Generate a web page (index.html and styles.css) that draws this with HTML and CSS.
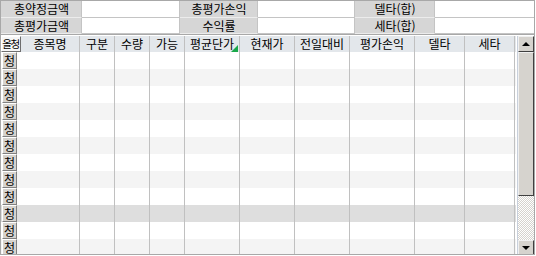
FILE: index.html
```html
<!DOCTYPE html>
<html lang="ko">
<head>
<meta charset="utf-8">
<link rel="stylesheet" href="styles.css">
</head>
<body>
<div class="wrap">
  <div class="summary">
    <div class="lbl">총약정금액</div><div class="val"></div>
    <div class="lbl">총평가손익</div><div class="val"></div>
    <div class="lbl">델타(합)</div><div class="val last"></div>
    <div class="lbl">총평가금액</div><div class="val"></div>
    <div class="lbl">수익률</div><div class="val"></div>
    <div class="lbl">세타(합)</div><div class="val last"></div>
  </div>
  <div class="gridarea">
    <div class="table">
      <div class="row head">
        <div class="hbtn">올청</div>
        <div class="hc">종목명</div>
        <div class="hc">구분</div>
        <div class="hc">수량</div>
        <div class="hc">가능</div>
        <div class="hc sorted">평균단가<span class="tri"></span></div>
        <div class="hc">현재가</div>
        <div class="hc">전일대비</div>
        <div class="hc">평가손익</div>
        <div class="hc">델타</div>
        <div class="hc">세타</div>
      </div>
      <div class="body">
        <div class="row"><div class="rbtn">청</div><div class="c"></div><div class="c"></div><div class="c"></div><div class="c"></div><div class="c"></div><div class="c"></div><div class="c"></div><div class="c"></div><div class="c"></div><div class="c"></div></div>
        <div class="row alt"><div class="rbtn">청</div><div class="c"></div><div class="c"></div><div class="c"></div><div class="c"></div><div class="c"></div><div class="c"></div><div class="c"></div><div class="c"></div><div class="c"></div><div class="c"></div></div>
        <div class="row"><div class="rbtn">청</div><div class="c"></div><div class="c"></div><div class="c"></div><div class="c"></div><div class="c"></div><div class="c"></div><div class="c"></div><div class="c"></div><div class="c"></div><div class="c"></div></div>
        <div class="row alt"><div class="rbtn">청</div><div class="c"></div><div class="c"></div><div class="c"></div><div class="c"></div><div class="c"></div><div class="c"></div><div class="c"></div><div class="c"></div><div class="c"></div><div class="c"></div></div>
        <div class="row"><div class="rbtn">청</div><div class="c"></div><div class="c"></div><div class="c"></div><div class="c"></div><div class="c"></div><div class="c"></div><div class="c"></div><div class="c"></div><div class="c"></div><div class="c"></div></div>
        <div class="row alt"><div class="rbtn">청</div><div class="c"></div><div class="c"></div><div class="c"></div><div class="c"></div><div class="c"></div><div class="c"></div><div class="c"></div><div class="c"></div><div class="c"></div><div class="c"></div></div>
        <div class="row"><div class="rbtn">청</div><div class="c"></div><div class="c"></div><div class="c"></div><div class="c"></div><div class="c"></div><div class="c"></div><div class="c"></div><div class="c"></div><div class="c"></div><div class="c"></div></div>
        <div class="row alt"><div class="rbtn">청</div><div class="c"></div><div class="c"></div><div class="c"></div><div class="c"></div><div class="c"></div><div class="c"></div><div class="c"></div><div class="c"></div><div class="c"></div><div class="c"></div></div>
        <div class="row"><div class="rbtn">청</div><div class="c"></div><div class="c"></div><div class="c"></div><div class="c"></div><div class="c"></div><div class="c"></div><div class="c"></div><div class="c"></div><div class="c"></div><div class="c"></div></div>
        <div class="row sel"><div class="rbtn">청</div><div class="c"></div><div class="c"></div><div class="c"></div><div class="c"></div><div class="c"></div><div class="c"></div><div class="c"></div><div class="c"></div><div class="c"></div><div class="c"></div></div>
        <div class="row"><div class="rbtn">청</div><div class="c"></div><div class="c"></div><div class="c"></div><div class="c"></div><div class="c"></div><div class="c"></div><div class="c"></div><div class="c"></div><div class="c"></div><div class="c"></div></div>
        <div class="row alt"><div class="rbtn">청</div><div class="c"></div><div class="c"></div><div class="c"></div><div class="c"></div><div class="c"></div><div class="c"></div><div class="c"></div><div class="c"></div><div class="c"></div><div class="c"></div></div>
      </div>
    </div>
    <div class="scroll">
      <div class="sbtn"><span class="up"></span></div>
      <div class="thumb"></div>
      <div class="track"></div>
      <div class="sbtn"><span class="down"></span></div>
    </div>
  </div>
</div>
</body>
</html>
```
FILE: styles.css
```css
html, body {
  margin: 0;
  padding: 0;
  background: #ffffff;
}
body {
  font-family: "Noto Sans CJK KR", "Noto Sans", sans-serif;
  font-size: 12px;
  color: #000;
}
.wrap {
  width: 535px;
  height: 255px;
  box-sizing: border-box;
  border: 1px solid #a8a8a8;
  display: flex;
  flex-direction: column;
  overflow: hidden;
}
.summary {
  display: grid;
  grid-template-columns: 81px 98px 78px 97px 80px 1fr;
  grid-template-rows: 17px 16px;
  border-bottom: 1px solid #a8a8a8;
}
.lbl {
  background: #d6d6d6;
  border-right: 1px solid #c4c4c4;
  border-bottom: 1px solid #ececec;
  text-align: center;
  line-height: 16px;
  padding-left: 1px;
}
.val {
  background: #fff;
  border-right: 1px solid #c4c4c4;
  border-bottom: 1px solid #c4c4c4;
}
.val.last { border-right: none; }
.gridarea {
  flex: 1;
  display: flex;
  padding-top: 1px;
}
.table {
  width: 516px;
  display: flex;
  flex-direction: column;
}
.row {
  display: grid;
  grid-template-columns: 16px 63px 35px 35px 35px 55px 55px 55px 65px 50px 50px;
  height: 17px;
  background: #ffffff;
}
.row.alt { background: #f4f4f4; }
.row.sel { background: #dedede; }
.head {
  height: 16px;
  background: #e3e7eb;
  grid-template-columns: 20px 59px 35px 35px 35px 55px 55px 55px 65px 50px 50px;
}
.hc {
  border-right: 1px solid #c0c0c0;
  text-align: center;
  line-height: 16px;
  position: relative;
}
.hbtn {
  background: #f6f6f6;
  border: 1px solid;
  border-color: #ffffff #6e6e6e #6e6e6e #ffffff;
  text-align: center;
  line-height: 14px;
  font-size: 10.5px;
  letter-spacing: -1.5px;
  text-indent: -1px;
  white-space: nowrap;
}
.tri {
  position: absolute;
  right: 1px;
  bottom: 0;
  width: 0;
  height: 0;
  border-left: 7px solid transparent;
  border-bottom: 7px solid #1aa84a;
}
.body {
  flex: 1;
}
.c {
  border-right: 1px solid #c0c0c0;
}
.rbtn {
  background: #d6d3ce;
  border: 1px solid;
  border-color: #ffffff #808080 #808080 #ffffff;
  text-align: center;
  line-height: 15px;
  margin-left: 1px;
}
.scroll {
  width: 16px;
  margin-left: 1px;
  border-left: 1px solid #c8d0dc;
  display: flex;
  flex-direction: column;
}
.sbtn {
  height: 16px;
  box-sizing: border-box;
  background: #d6d3ce;
  border: 1px solid;
  border-color: #f0f0f0 #404040 #404040 #f0f0f0;
  display: flex;
  align-items: center;
  justify-content: center;
}
.up {
  width: 0;
  height: 0;
  border-left: 4px solid transparent;
  border-right: 4px solid transparent;
  border-bottom: 4px solid #000;
}
.down {
  width: 0;
  height: 0;
  border-left: 4px solid transparent;
  border-right: 4px solid transparent;
  border-top: 4px solid #000;
}
.thumb {
  height: 144px;
  box-sizing: border-box;
  background: #d6d3ce;
  border: 1px solid;
  border-color: #f0f0f0 #404040 #404040 #f0f0f0;
}
.track {
  flex: 1;
  background-color: #ffffff;
  background-image: repeating-conic-gradient(#d6d3ce 0 25%, #ffffff 0 50%);
  background-size: 2px 2px;
}
```
